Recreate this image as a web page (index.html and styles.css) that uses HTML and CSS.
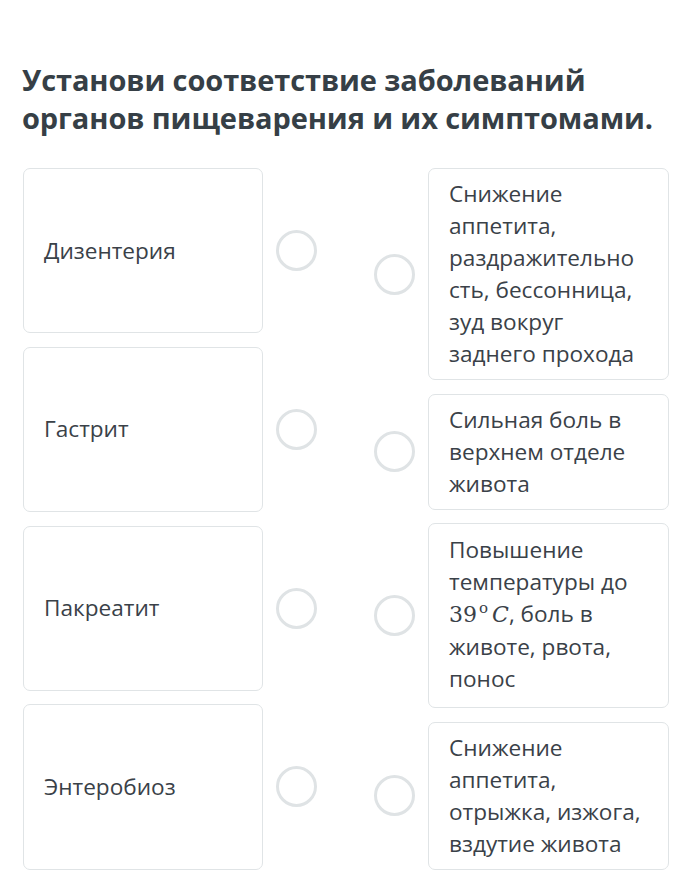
FILE: index.html
```html
<!DOCTYPE html>
<html lang="ru">
<head>
    <meta charset="UTF-8">
    <meta name="viewport" content="width=device-width, initial-scale=1.0">
    <title>Установи соответствие</title>
    <link rel="stylesheet" href="styles.css">
</head>
<body>
    <div class="question">
        <h1>Установи соответствие заболеваний органов пищеварения и их симптомами.</h1>

        <div class="match">
            <div class="column left">
                <div class="row">
                    <div class="card term">Дизентерия</div>
                    <span class="dot"></span>
                </div>
                <div class="row">
                    <div class="card term">Гастрит</div>
                    <span class="dot"></span>
                </div>
                <div class="row">
                    <div class="card term">Пакреатит</div>
                    <span class="dot"></span>
                </div>
                <div class="row">
                    <div class="card term">Энтеробиоз</div>
                    <span class="dot"></span>
                </div>
            </div>

            <div class="column right">
                <div class="row">
                    <span class="dot"></span>
                    <div class="card answer">Снижение аппетита, раздражительно сть, бессонница, зуд вокруг заднего прохода</div>
                </div>
                <div class="row">
                    <span class="dot"></span>
                    <div class="card answer">Сильная боль в верхнем отделе живота</div>
                </div>
                <div class="row">
                    <span class="dot"></span>
                    <div class="card answer tall"><span>Повышение температуры до</span> <span class="math"><span>39</span><span class="deg">o</span><span class="var">C</span></span><span>, боль в</span> <span>животе, рвота, понос</span></div>
                </div>
                <div class="row">
                    <span class="dot"></span>
                    <div class="card answer">Снижение аппетита, отрыжка, изжога, вздутие живота</div>
                </div>
            </div>
        </div>
    </div>
</body>
</html>
```

FILE: styles.css
```css
* {
    margin: 0;
    padding: 0;
    box-sizing: border-box;
}

body {
    font-family: 'Open Sans', 'Noto Sans', sans-serif;
    background: #fff;
    color: #3d444a;
}

.question {
    padding: 61px 26px 0 22px;
}

h1 {
    font-size: 29px;
    font-weight: 700;
    line-height: 38px;
    color: #363f46;
    margin-bottom: 31px;
    letter-spacing: -0.1px;
}

.match {
    display: grid;
    grid-template-columns: 295px 295px;
    justify-content: space-between;
    padding-left: 1px;
}

.column {
    display: flex;
    flex-direction: column;
    gap: 13.5px;
}

.row {
    display: flex;
    align-items: center;
}

.left .row {
    flex: 1;
    gap: 13px;
}

.right .row {
    gap: 13px;
}

.card {
    width: 240px;
    border: 1.5px solid #e0e4e6;
    border-radius: 7px;
    background: #fff;
    font-size: 22.6px;
    line-height: 32px;
    color: #3a4148;
}

.term {
    align-self: stretch;
    display: flex;
    align-items: center;
    padding: 0 20px;
}

.answer {
    width: 241px;
    padding: 9px 16px 9px 20px;
}

.answer.tall {
    padding: 10px 16px 12px 20px;
}

.math {
    font-family: 'DejaVu Serif', 'Liberation Serif', serif;
    font-size: 22px;
    white-space: nowrap;
}

.math .deg {
    display: inline-block;
    font-size: 15px;
    line-height: 15px;
    vertical-align: 9px;
    margin: 0 4px 0 2px;
}

.math .var {
    font-style: italic;
}

.dot {
    flex: none;
    width: 41px;
    height: 41px;
    border: 3.5px solid #dfe3e5;
    border-radius: 50%;
}
```
